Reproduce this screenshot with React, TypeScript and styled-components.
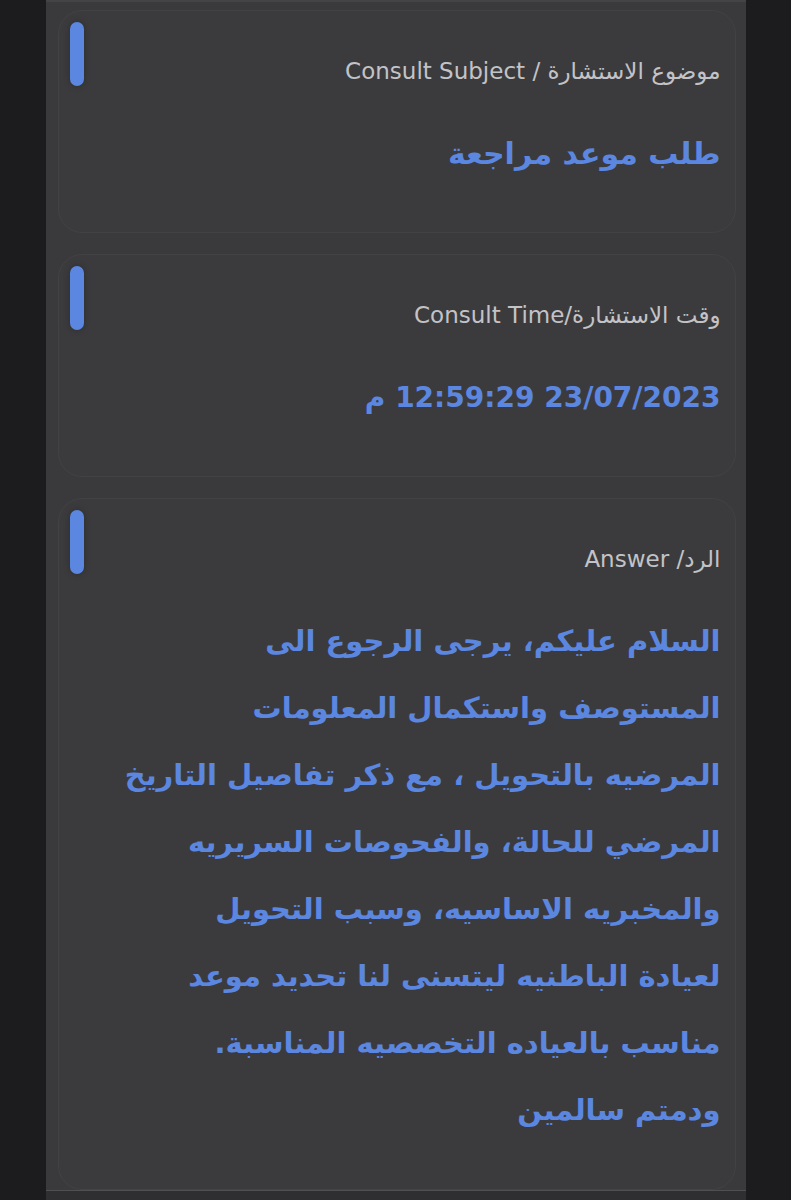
import styled, { createGlobalStyle } from 'styled-components';

const GlobalStyle = createGlobalStyle`
	html, body {
		margin: 0;
		padding: 0;
		background: #1c1c1e;
	}
	body {
		font-family: 'DejaVu Sans', 'Noto Sans', sans-serif;
	}
`;

const Page = styled.div`
	display: flex;
	justify-content: center;
	height: 1200px;
	overflow: hidden;
	background: #1c1c1e;
`;

const Panel = styled.div`
	width: 700px;
	display: flex;
	flex-direction: column;
	background: #3a3a3c;
	border-top: 2px solid #444446;
`;

const CardList = styled.div`
	display: flex;
	flex-direction: column;
	gap: 21px;
	padding: 8px 10px 0 12px;
	height: 1188px;
	box-sizing: border-box;
`;

const Card = styled.div<{ $grow?: boolean }>`
	display: flex;
	flex-direction: column;
	border: 1px solid #424245;
	border-radius: 24px;
	background: #3b3b3d;
	padding: 11px 14px 44px 11px;
	box-sizing: border-box;
	${(p) => (p.$grow ? 'flex: 1;' : 'min-height: 223px;')}
`;

const Header = styled.div`
	display: flex;
	direction: ltr;
	justify-content: space-between;
	align-items: flex-end;
`;

const Pill = styled.div`
	width: 14px;
	height: 64px;
	border-radius: 7px;
	background: #5b87e1;
	box-shadow: 0 0 6px rgba(0, 0, 0, 0.25);
	flex-shrink: 0;
`;

const Label = styled.div`
	direction: rtl;
	font-size: 23px;
	line-height: 30px;
	color: #c3c3c7;
	white-space: nowrap;
`;

const Value = styled.div<{ $size?: number }>`
	direction: rtl;
	text-align: right;
	margin-top: 34px;
	font-size: ${(p) => p.$size ?? 29}px;
	font-weight: bold;
	line-height: 67px;
	color: #5b87e1;
`;

const Line = styled.div`
	white-space: nowrap;
`;

const Footer = styled.div`
	flex: 1;
	border-top: 1px solid #505053;
	background: #2f2f31;
`;

const answerLines = [
	'السلام عليكم، يرجى الرجوع الى',
	'المستوصف واستكمال المعلومات',
	'المرضيه بالتحويل ، مع ذكر تفاصيل التاريخ',
	'المرضي للحالة، والفحوصات السريريه',
	'والمخبريه الاساسيه، وسبب التحويل',
	'لعيادة الباطنيه ليتسنى لنا تحديد موعد',
	'مناسب بالعياده التخصصيه المناسبة.',
	'ودمتم سالمين',
];

const App = () => {
	return (
		<Page>
			<GlobalStyle />
			<Panel>
				<CardList>
					<Card>
						<Header>
							<Pill />
							<Label>موضوع الاستشارة / Consult Subject</Label>
						</Header>
						<Value $size={30}>طلب موعد مراجعة</Value>
					</Card>
					<Card>
						<Header>
							<Pill />
							<Label>وقت الاستشارة/Consult Time</Label>
						</Header>
						<Value $size={28}>23/07/2023 12:59:29 م</Value>
					</Card>
					<Card $grow>
						<Header>
							<Pill />
							<Label>الرد/ Answer</Label>
						</Header>
						<Value>
							{answerLines.map((line) => (
								<Line key={line}>{line}</Line>
							))}
						</Value>
					</Card>
				</CardList>
				<Footer />
			</Panel>
		</Page>
	);
};

export default App;
